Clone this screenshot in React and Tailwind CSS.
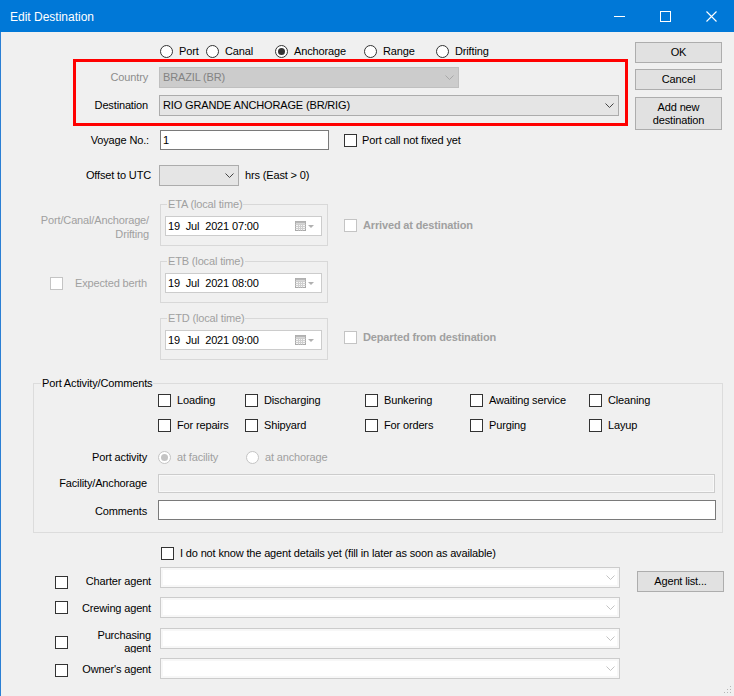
import React from "react";

// small widgets in the Windows Forms look

const Chevron = ({ color = "#444444" }) => (
  <svg width="9" height="5" viewBox="0 0 9 5" fill="none">
    <path d="M0.5 0.5L4.5 4.5L8.5 0.5" stroke={color} strokeWidth="1" />
  </svg>
);

const CalendarIcon = () => (
  <svg width="20" height="10" viewBox="0 0 20 10" fill="none">
    <rect x="0.5" y="0.5" width="10" height="9" fill="#f6f6f6" stroke="#a9a9a9" />
    <path d="M0.5 3.5h10M0.5 5.5h10M0.5 7.5h10M3.5 3.5v6M5.5 3.5v6M7.5 3.5v6" stroke="#cfcfcf" />
    <path d="M0.5 0.5h10v2h-10z" fill="#b8b8b8" />
    <path d="M13 4h6l-3 3z" fill="#b0b0b0" />
  </svg>
);

const Checkbox = ({ label, disabled, bold, className = "", textClass = "ml-[6px]" }) => (
  <div className={`flex items-center ${className}`}>
    <span
      className={`w-[13px] h-[13px] shrink-0 border bg-white ${
        disabled ? "border-[#c4c4c4]" : "border-[#333333]"
      }`}
    />
    {label && (
      <span
        className={`${textClass} whitespace-nowrap ${disabled ? "text-[#a0a0a0]" : ""} ${
          bold ? "font-bold" : ""
        }`}
      >
        {label}
      </span>
    )}
  </div>
);

const Radio = ({ label, checked, disabled, className = "" }) => (
  <div className={`flex items-center ${className}`}>
    <span
      className={`w-[13px] h-[13px] shrink-0 rounded-full border bg-white flex items-center justify-center ${
        disabled ? "border-[#c4c4c4]" : "border-[#333333]"
      }`}
    >
      {checked && (
        <span className={`w-[7px] h-[7px] rounded-full ${disabled ? "bg-[#c4c4c4]" : "bg-[#333333]"}`} />
      )}
    </span>
    <span className={`ml-[6px] whitespace-nowrap ${disabled ? "text-[#a0a0a0]" : ""}`}>{label}</span>
  </div>
);

const Combo = ({ value, tone = "normal", className = "" }) => {
  const tones = {
    disabled: "bg-[#cccccc] border-[#bfbfbf] text-[#838383]",
    normal: "bg-[#e5e5e5] border-[#acacac]",
    agent: "bg-white border-[#cccccc] shadow-[inset_0_0_0_2px_#f7f7f7]",
  };
  const chevron = { disabled: "#a8a8a8", normal: "#444444", agent: "#c4c4c4" };
  return (
    <div className={`h-[21px] border flex items-center pl-[3px] pr-[4px] ${tones[tone]} ${className}`}>
      <span className="flex-1 whitespace-nowrap">{value}</span>
      <Chevron color={chevron[tone]} />
    </div>
  );
};

const Button = ({ children, className = "" }) => (
  <div
    className={`bg-[#e1e1e1] border border-[#adadad] flex flex-col items-center justify-center text-center leading-[13px] ${className}`}
  >
    {children}
  </div>
);

const GroupBox = ({ title, className = "", children }) => (
  <div className={`relative border border-[#d8d8d8] ${className}`}>
    <span className="absolute -top-[7px] left-[6px] px-[1px] bg-[#f0f0f0] leading-[13px] whitespace-nowrap text-[#a0a0a0]">
      {title}
    </span>
    {children}
  </div>
);

const GroupBoxDark = ({ title, className = "", children }) => (
  <div className={`relative border border-[#dcdcdc] ${className}`}>
    <span className="absolute -top-[7px] left-[7px] px-[1px] bg-[#f0f0f0] leading-[13px] whitespace-nowrap">
      {title}
    </span>
    {children}
  </div>
);

const DatePicker = ({ value }) => (
  <div className="ml-[4px] mt-[11px] w-[157px] h-[20px] bg-white border border-[#cccccc] flex items-center pl-[2px] pr-[6px]">
    <span className="flex-1 whitespace-pre">{value}</span>
    <CalendarIcon />
  </div>
);

const activities = [
  "Loading",
  "Discharging",
  "Bunkering",
  "Awaiting service",
  "Cleaning",
  "For repairs",
  "Shipyard",
  "For orders",
  "Purging",
  "Layup",
];

const agents = [
  { name: "Charter agent", box: "mt-[9px]", label: "pt-[7px]" },
  { name: "Crewing agent", box: "mt-[4px]", gap: "mt-[9px]", label: "pt-[1px]" },
  { name: "Purchasing agent", box: "mt-[8px]", gap: "mt-[10px]", wrap: true },
  { name: "Owner's agent", box: "mt-[6px]", gap: "mt-[9px]", label: "pt-[1px]" },
];

export default function App() {
  return (
    <div className="w-[734px] h-[696px] overflow-hidden bg-[#f0f0f0] flex flex-col relative font-['Liberation_Sans',Arial,sans-serif] text-[11px] leading-[13px] tracking-[-0.15px] text-black">
      {/* Title bar */}
      <div className="h-[32px] shrink-0 bg-[#0078d7] flex items-center text-white tracking-normal">
        <span className="ml-[10px] text-[12px] leading-[14px] pt-[2px]">Edit Destination</span>
        <div className="ml-auto flex items-center h-full">
          <div className="w-[46px] h-full flex items-center justify-center">
            <svg width="11" height="11" viewBox="0 0 11 11">
              <path d="M0 5.5h11" stroke="#ffffff" strokeWidth="1" />
            </svg>
          </div>
          <div className="w-[46px] h-full flex items-center justify-center">
            <svg width="11" height="11" viewBox="0 0 11 11" fill="none">
              <rect x="0.5" y="0.5" width="10" height="10" stroke="#ffffff" />
            </svg>
          </div>
          <div className="w-[46px] h-full flex items-center justify-center">
            <svg width="11" height="11" viewBox="0 0 11 11">
              <path d="M0.5 0.5L10.5 10.5M10.5 0.5L0.5 10.5" stroke="#ffffff" strokeWidth="1.1" />
            </svg>
          </div>
        </div>
      </div>

      {/* Body */}
      <div className="flex-1 border-l border-[#2a7fd4] flex flex-col">
        {/* Type + destination */}
        <div className="h-[98px] shrink-0 flex items-start">
          <div className="w-[627px] flex flex-col">
            <div className="mt-[12px] h-[14px] pl-[159px] flex items-center pt-[1px]">
              <Radio label="Port" className="w-[46px]" />
              <Radio label="Canal" className="w-[69px]" />
              <Radio label="Anchorage" checked className="w-[89px]" />
              <Radio label="Range" className="w-[72px]" />
              <Radio label="Drifting" />
            </div>
            <div className="mt-[1px] ml-[72px] w-[555px] h-[67px] border-[3px] border-[#ff0000] flex flex-col pt-[5px]">
              <div className="flex items-center">
                <span className="w-[72px] text-right text-[#8d8d8d]">Country</span>
                <Combo value="BRAZIL (BR)" tone="disabled" className="ml-[11px] w-[300px]" />
              </div>
              <div className="mt-[7px] flex items-center">
                <span className="w-[72px] text-right">Destination</span>
                <Combo value="RIO GRANDE ANCHORAGE (BR/RIG)" className="ml-[11px] w-[460px]" />
              </div>
            </div>
          </div>
          <div className="ml-[7px] w-[87px] mt-[10px] flex flex-col">
            <Button className="h-[21px]">OK</Button>
            <Button className="mt-[6px] h-[21px]">Cancel</Button>
            <Button className="mt-[7px] h-[33px]">
              <span>Add new</span>
              <span>destination</span>
            </Button>
          </div>
        </div>

        {/* Voyage / offset */}
        <div className="flex items-center h-[20px]">
          <span className="w-[148px] text-right">Voyage No.:</span>
          <div className="ml-[11px] w-[169px] h-[20px] bg-white border border-[#7a7a7a] pl-[2px] flex items-center">
            1
          </div>
          <Checkbox label="Port call not fixed yet" className="ml-[15px]" textClass="ml-[5px]" />
        </div>
        <div className="mt-[15px] flex items-center">
          <span className="w-[150px] text-right">Offset to UTC</span>
          <Combo value="" className="ml-[8px] w-[80px]" />
          <span className="ml-[6px]">hrs (East &gt; 0)</span>
        </div>

        {/* ETA */}
        <div className="mt-[18px] flex items-start">
          <div className="w-[159px] pr-[11px] mt-[9px] text-right text-[#a0a0a0] leading-[14px]">
            Port/Canal/Anchorage/
            <br />
            Drifting
          </div>
          <GroupBox title="ETA (local time)" className="w-[168px] h-[42px]">
            <DatePicker value="19  Jul  2021 07:00" />
          </GroupBox>
          <Checkbox label="Arrived at destination" disabled bold className="ml-[16px] mt-[15px]" />
        </div>

        {/* ETB */}
        <div className="mt-[15px] flex items-start">
          <div className="w-[159px] pl-[49px] pt-[16px]">
            <Checkbox label="Expected berth" disabled textClass="ml-[12px]" />
          </div>
          <GroupBox title="ETB (local time)" className="w-[168px] h-[42px]">
            <DatePicker value="19  Jul  2021 08:00" />
          </GroupBox>
        </div>

        {/* ETD */}
        <div className="mt-[15px] flex items-start">
          <div className="w-[159px]" />
          <GroupBox title="ETD (local time)" className="w-[168px] h-[42px]">
            <DatePicker value="19  Jul  2021 09:00" />
          </GroupBox>
          <Checkbox label="Departed from destination" disabled bold className="ml-[16px] mt-[13px]" />
        </div>

        {/* Port activity */}
        <GroupBoxDark
          title="Port Activity/Comments"
          className="mt-[23px] ml-[32px] w-[690px] h-[150px] flex flex-col shrink-0"
        >
          <div className="mt-[10px] ml-[124px] grid grid-cols-[87px_120px_105px_119px_auto] gap-y-[12px]">
            {activities.map((a) => (
              <Checkbox key={a} label={a} />
            ))}
          </div>
          <div className="mt-[19px] flex items-center h-[13px]">
            <span className="w-[113px] text-right">Port activity</span>
            <Radio label="at facility" checked disabled className="ml-[11px] w-[88px]" />
            <Radio label="at anchorage" disabled />
          </div>
          <div className="mt-[10px] flex items-center">
            <span className="w-[113px] text-right">Facility/Anchorage</span>
            <div className="ml-[11px] w-[557px] h-[19px] border border-[#cccccc] bg-[#f0f0f0] shadow-[inset_0_0_0_1px_#f8f8f8]" />
          </div>
          <div className="mt-[7px] flex items-center">
            <span className="w-[113px] text-right pt-[3px]">Comments</span>
            <div className="ml-[11px] w-[558px] h-[20px] border border-[#7a7a7a] bg-white" />
          </div>
        </GroupBoxDark>

        {/* Agents */}
        <Checkbox
          label="I do not know the agent details yet (fill in later as soon as available)"
          className="mt-[14px] ml-[160px]"
        />
        {agents.map((ag, i) => (
          <div key={ag.name} className={`flex items-start h-[21px] ${ag.gap ?? "mt-[7px]"}`}>
            <Checkbox className={`ml-[54px] ${ag.box}`} />
            {ag.wrap ? (
              <div className="w-[83px] h-[24px] mt-[1px] overflow-hidden text-right leading-[13px]">
                Purchasing
                <br />
                agent
              </div>
            ) : (
              <div className={`w-[83px] h-[21px] flex items-center justify-end ${ag.label}`}>{ag.name}</div>
            )}
            <Combo value="" tone="agent" className="ml-[9px] w-[460px]" />
            {i === 0 && <Button className="ml-[17px] mt-[4px] w-[87px] h-[21px]">Agent list...</Button>}
          </div>
        ))}
      </div>

      {/* size grip */}
      <svg className="absolute right-[2px] bottom-[2px]" width="10" height="10" viewBox="0 0 10 10">
        <rect x="8" y="2" width="1" height="1" fill="#b5b5b5" />
        <rect x="5" y="5" width="1" height="1" fill="#b5b5b5" />
        <rect x="8" y="5" width="1" height="1" fill="#b5b5b5" />
        <rect x="2" y="8" width="1" height="1" fill="#b5b5b5" />
        <rect x="5" y="8" width="1" height="1" fill="#b5b5b5" />
        <rect x="8" y="8" width="1" height="1" fill="#b5b5b5" />
      </svg>
    </div>
  );
}
